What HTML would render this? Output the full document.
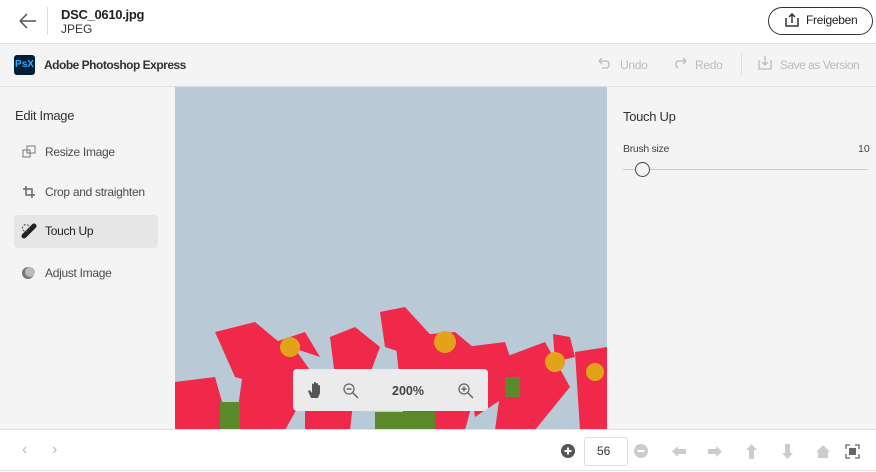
<!DOCTYPE html>
<html><head><style>
*{margin:0;padding:0;box-sizing:border-box}
body{width:876px;height:472px;overflow:hidden;background:#fff;font-family:"Liberation Sans",sans-serif;color:#2c2c2c;position:relative}
.abs{position:absolute}
.hdr{left:0;top:0;width:876px;height:44px;background:#fff;border-bottom:1px solid #e1e1e1}
.tb{left:0;top:44px;width:876px;height:43px;background:#f4f4f4;border-bottom:1px solid #e1e1e1}
.lp{left:0;top:87px;width:175px;height:343px;background:#f4f4f4}
.rp{left:607px;top:87px;width:269px;height:343px;background:#f4f4f4}
.img{left:175px;top:87px;width:432px;height:343px;background:#b9cad6;overflow:hidden}
.bb{left:0;top:429px;width:876px;height:42px;background:#fff;border-top:1px solid #e1e1e1;border-bottom:1px solid #e1e1e1}
.item{left:14px;width:144px;height:33px;border-radius:4px;font-size:12px;color:#4b4b4b;line-height:33px;padding-left:31px;letter-spacing:-0.3px}
.g{color:#bbb}
</style></head><body>
<div class="abs hdr"></div>
<svg class="abs" style="left:18px;top:12px" width="20" height="18"><path d="M2 9H18M2 9L9 2M2 9L9 16" stroke="#555" stroke-width="1.5" fill="none"/></svg>
<div class="abs" style="left:47px;top:7px;width:1px;height:28px;background:#ddd"></div>
<div class="abs" style="left:61px;top:7px;font-size:13px;font-weight:bold;color:#222;letter-spacing:-0.3px">DSC_0610.jpg</div>
<div class="abs" style="left:61px;top:22px;font-size:12px;color:#333">JPEG</div>
<div class="abs" style="left:768px;top:7px;width:105px;height:28px;border:1.5px solid #333;border-radius:14px;font-size:12px;line-height:25px;padding-left:37px;color:#222;letter-spacing:-0.3px">Freigeben</div>
<svg class="abs" style="left:784px;top:13px" width="16" height="15"><path d="M2 5V13H14V5M8 10V1M5 4L8 1L11 4" stroke="#333" stroke-width="1.5" fill="none"/></svg>

<div class="abs tb"></div>
<div class="abs" style="left:14px;top:55px;width:21px;height:20px;background:#001e36;border-radius:3px;color:#31a8ff;font-size:10px;font-weight:bold;line-height:20px;text-align:center">PsX</div>
<div class="abs" style="left:44px;top:58px;font-size:12px;font-weight:bold;color:#333;letter-spacing:-0.5px">Adobe Photoshop Express</div>
<svg class="abs" style="left:597px;top:57px" width="16" height="12"><path d="M2 4H10A4 4 0 0 1 10 11H5M2 4L5 1M2 4L5 7" stroke="#bbb" stroke-width="1.3" fill="none"/></svg>
<div class="abs g" style="left:620px;top:58px;font-size:12px;letter-spacing:-0.3px">Undo</div>
<svg class="abs" style="left:672px;top:57px" width="16" height="12"><path d="M14 4H6A4 4 0 0 0 6 11M14 4L11 1M14 4L11 7" stroke="#bbb" stroke-width="1.3" fill="none"/></svg>
<div class="abs g" style="left:695px;top:58px;font-size:12px;letter-spacing:-0.3px">Redo</div>
<div class="abs" style="left:741px;top:54px;width:1px;height:21px;background:#ddd"></div>
<svg class="abs" style="left:757px;top:55px" width="16" height="16"><path d="M2 5V14H14V5M8 1V10M5 7L8 10L11 7" stroke="#bbb" stroke-width="1.3" fill="none"/></svg>
<div class="abs g" style="left:780px;top:58px;font-size:12px;letter-spacing:-0.5px">Save as Version</div>

<div class="abs lp"></div>
<div class="abs" style="left:15px;top:108px;font-size:13px;color:#333;letter-spacing:-0.3px">Edit Image</div>
<div class="abs item" style="top:136px">Resize Image</div>
<svg class="abs" style="left:22px;top:145px" width="14" height="13"><rect x="1" y="5" width="7" height="7" fill="none" stroke="#777"/><rect x="5" y="1" width="8" height="7" fill="none" stroke="#777"/></svg>
<div class="abs item" style="top:176px">Crop and straighten</div>
<svg class="abs" style="left:22px;top:185px" width="14" height="14"><path d="M4 1V10H13M1 4H10V13" stroke="#666" stroke-width="1.5" fill="none"/></svg>
<div class="abs item" style="top:215px;background:#e6e6e6;color:#222">Touch Up</div>
<svg class="abs" style="left:21px;top:223px" width="16" height="16"><path d="M3 13L13 3" stroke="#222" stroke-width="5" stroke-linecap="round"/><circle cx="5" cy="5" r="3.5" fill="none" stroke="#444" stroke-dasharray="2 1.5"/></svg>
<div class="abs item" style="top:257px">Adjust Image</div>
<svg class="abs" style="left:21px;top:265px" width="16" height="16"><circle cx="7" cy="8" r="6" fill="#777"/><circle cx="9" cy="7" r="5" fill="#bbb"/></svg>

<div class="abs img">
<svg width="432" height="343">
<g fill="#f0294a">
<path d="M40 245L80 235L110 260L95 300L60 290Z"/>
<path d="M70 270L115 255L140 290L110 343L60 343Z"/>
<path d="M0 295L40 290L55 343L0 343Z"/>
<path d="M100 255L130 245L145 270Z"/>
<path d="M155 250L180 240L205 260L190 300L160 290Z"/>
<path d="M205 225L230 220L262 255L240 270L210 260Z"/>
<path d="M220 250L280 245L310 270L290 343L230 343Z"/>
<path d="M290 260L330 255L345 300L300 330Z"/>
<path d="M330 270L370 255L395 300L360 343L320 343Z"/>
<path d="M378 247L395 250L400 270L380 275Z"/>
<path d="M400 265L432 260L432 343L405 343Z"/>
<path d="M130 300L180 300L175 343L130 343Z"/>
</g>
<g fill="#e2a21a"><circle cx="115" cy="260" r="10"/><circle cx="270" cy="255" r="11"/><circle cx="380" cy="275" r="10"/><circle cx="420" cy="285" r="9"/><circle cx="240" cy="300" r="8"/></g>
<g fill="#5a8a2c"><rect x="200" y="325" width="60" height="18"/><rect x="45" y="315" width="20" height="28"/><rect x="330" y="290" width="15" height="20"/></g>
</svg>
</div>
<div class="abs" style="left:293px;top:369px;width:195px;height:42px;background:#ebebeb;border-radius:4px"></div>
<svg class="abs" style="left:307px;top:381px" width="16" height="18"><path d="M4 17L1 10L2.5 9L5 12V3.5A1 1 0 0 1 7 3.5V9V2A1 1 0 0 1 9 2V9V3A1 1 0 0 1 11 3V9.5V5A1 1 0 0 1 13 5V12L11 17Z" fill="#555"/></svg>
<svg class="abs" style="left:342px;top:382px" width="18" height="18"><circle cx="7" cy="7" r="5" fill="none" stroke="#666" stroke-width="1.3"/><path d="M4.5 7H9.5M11 11L16 16" stroke="#666" stroke-width="1.5"/></svg>
<div class="abs" style="left:392px;top:384px;font-size:12.5px;font-weight:bold;color:#444">200%</div>
<svg class="abs" style="left:457px;top:382px" width="18" height="18"><circle cx="7" cy="7" r="5" fill="none" stroke="#666" stroke-width="1.3"/><path d="M4.5 7H9.5M7 4.5V9.5M11 11L16 16" stroke="#666" stroke-width="1.5"/></svg>

<div class="abs rp"></div>
<div class="abs" style="left:623px;top:109px;font-size:13px;color:#333;letter-spacing:-0.3px">Touch Up</div>
<div class="abs" style="left:623px;top:143px;font-size:10.5px;color:#444;letter-spacing:-0.3px">Brush size</div>
<div class="abs" style="left:858px;top:143px;font-size:10.5px;color:#444">10</div>
<div class="abs" style="left:623px;top:169px;width:245px;height:1px;background:#ccc"></div>
<div class="abs" style="left:635px;top:162px;width:15px;height:15px;border-radius:50%;border:1.3px solid #444;background:#f4f4f4"></div>

<div class="abs bb"></div>
<div class="abs" style="left:22px;top:441px;font-size:16px;color:#bbb">‹</div>
<div class="abs" style="left:52px;top:441px;font-size:16px;color:#bbb">›</div>
<svg class="abs" style="left:561px;top:444px" width="14" height="14"><circle cx="7" cy="7" r="7" fill="#555"/><path d="M3.5 7H10.5M7 3.5V10.5" stroke="#fff" stroke-width="2"/></svg>
<div class="abs" style="left:584px;top:437px;width:44px;height:29px;border:1px solid #ddd;border-radius:3px;font-size:12px;line-height:27px;padding-left:12px;color:#333">56</div>
<svg class="abs" style="left:634px;top:444px" width="14" height="14"><circle cx="7" cy="7" r="7" fill="#ccc"/><path d="M3.5 7H10.5" stroke="#fff" stroke-width="2"/></svg>
<svg class="abs" style="left:671px;top:445px" width="16" height="13"><path d="M1 6.5L7 1V4H15V9H7V12Z" fill="#ccc"/></svg>
<svg class="abs" style="left:707px;top:445px" width="16" height="13"><path d="M15 6.5L9 1V4H1V9H9V12Z" fill="#ccc"/></svg>
<svg class="abs" style="left:745px;top:443px" width="13" height="17"><path d="M6.5 1L12 7H9V16H4V7H1Z" fill="#ccc"/></svg>
<svg class="abs" style="left:781px;top:443px" width="13" height="17"><path d="M6.5 16L12 10H9V1H4V10H1Z" fill="#ccc"/></svg>
<svg class="abs" style="left:815px;top:444px" width="16" height="15"><path d="M8 1L15 8H13V14H3V8H1Z" fill="#ccc"/></svg>
<svg class="abs" style="left:845px;top:444px" width="15" height="15"><path d="M1 5V1H5M10 1H14V5M14 10V14H10M5 14H1V10" stroke="#666" stroke-width="1.3" fill="none"/><rect x="4" y="4" width="7" height="7" fill="#666"/></svg>
</body></html>
